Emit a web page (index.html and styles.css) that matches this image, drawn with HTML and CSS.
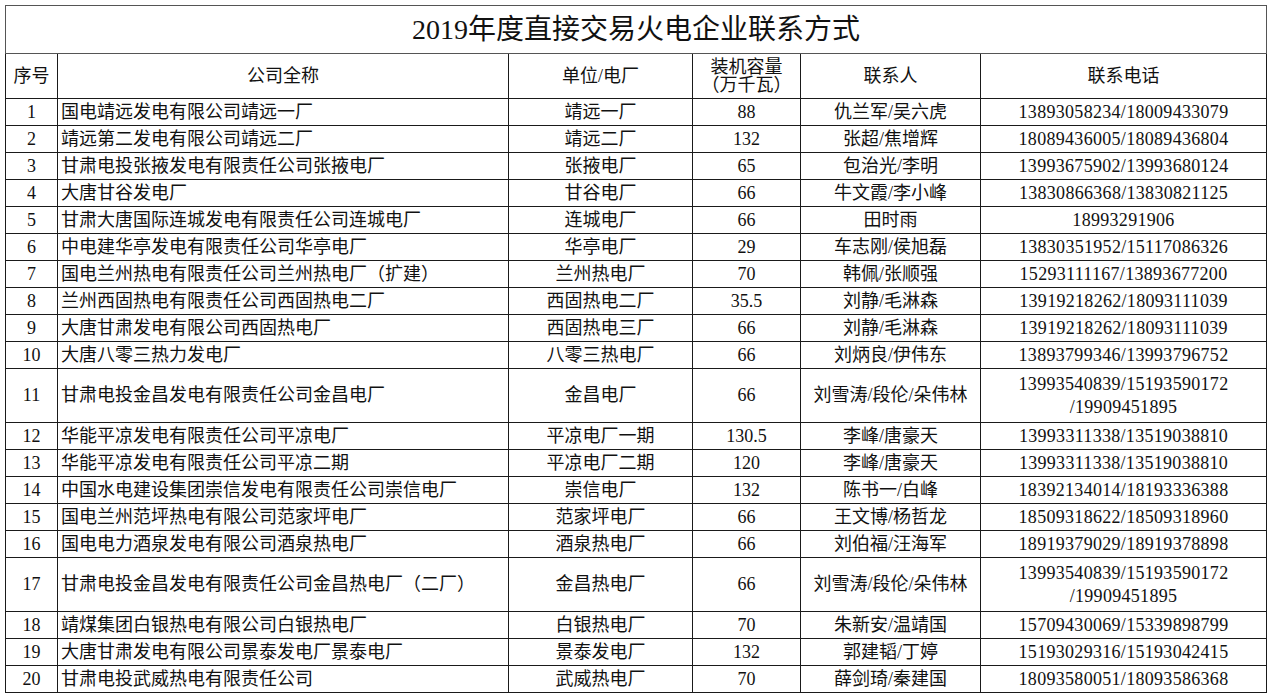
FILE: index.html
```html
<!DOCTYPE html>
<html lang="zh-CN">
<head>
<meta charset="utf-8">
<title>2019年度直接交易火电企业联系方式</title>
<link rel="stylesheet" href="styles.css">
</head>
<body>
<table class="sheet">
  <colgroup>
    <col class="c-no"><col class="c-name"><col class="c-unit"><col class="c-cap"><col class="c-person"><col class="c-phone">
  </colgroup>
  <thead>
    <tr class="title-row"><th colspan="6" class="title">2019年度直接交易火电企业联系方式</th></tr>
    <tr class="head-row">
      <th>序号</th><th>公司全称</th><th>单位/电厂</th><th>装机容量<br>（万千瓦）</th><th>联系人</th><th>联系电话</th>
    </tr>
  </thead>
  <tbody>
    <tr><td>1</td><td class="name">国电靖远发电有限公司靖远一厂</td><td>靖远一厂</td><td>88</td><td>仇兰军/吴六虎</td><td class="phone">13893058234/18009433079</td></tr>
    <tr><td>2</td><td class="name">靖远第二发电有限公司靖远二厂</td><td>靖远二厂</td><td>132</td><td>张超/焦增辉</td><td class="phone">18089436005/18089436804</td></tr>
    <tr><td>3</td><td class="name">甘肃电投张掖发电有限责任公司张掖电厂</td><td>张掖电厂</td><td>65</td><td>包治光/李明</td><td class="phone">13993675902/13993680124</td></tr>
    <tr><td>4</td><td class="name">大唐甘谷发电厂</td><td>甘谷电厂</td><td>66</td><td>牛文霞/李小峰</td><td class="phone">13830866368/13830821125</td></tr>
    <tr><td>5</td><td class="name">甘肃大唐国际连城发电有限责任公司连城电厂</td><td>连城电厂</td><td>66</td><td>田时雨</td><td class="phone">18993291906</td></tr>
    <tr><td>6</td><td class="name">中电建华亭发电有限责任公司华亭电厂</td><td>华亭电厂</td><td>29</td><td>车志刚/侯旭磊</td><td class="phone">13830351952/15117086326</td></tr>
    <tr><td>7</td><td class="name">国电兰州热电有限责任公司兰州热电厂（扩建）</td><td>兰州热电厂</td><td>70</td><td>韩佩/张顺强</td><td class="phone">15293111167/13893677200</td></tr>
    <tr><td>8</td><td class="name">兰州西固热电有限责任公司西固热电二厂</td><td>西固热电二厂</td><td>35.5</td><td>刘静/毛淋森</td><td class="phone">13919218262/18093111039</td></tr>
    <tr><td>9</td><td class="name">大唐甘肃发电有限公司西固热电厂</td><td>西固热电三厂</td><td>66</td><td>刘静/毛淋森</td><td class="phone">13919218262/18093111039</td></tr>
    <tr><td>10</td><td class="name">大唐八零三热力发电厂</td><td>八零三热电厂</td><td>66</td><td>刘炳良/伊伟东</td><td class="phone">13893799346/13993796752</td></tr>
    <tr class="tall"><td>11</td><td class="name">甘肃电投金昌发电有限责任公司金昌电厂</td><td>金昌电厂</td><td>66</td><td>刘雪涛/段伦/朵伟林</td><td class="phone">13993540839/15193590172<br>/19909451895</td></tr>
    <tr><td>12</td><td class="name">华能平凉发电有限责任公司平凉电厂</td><td>平凉电厂一期</td><td>130.5</td><td>李峰/唐豪天</td><td class="phone">13993311338/13519038810</td></tr>
    <tr><td>13</td><td class="name">华能平凉发电有限责任公司平凉二期</td><td>平凉电厂二期</td><td>120</td><td>李峰/唐豪天</td><td class="phone">13993311338/13519038810</td></tr>
    <tr><td>14</td><td class="name">中国水电建设集团崇信发电有限责任公司崇信电厂</td><td>崇信电厂</td><td>132</td><td>陈书一/白峰</td><td class="phone">18392134014/18193336388</td></tr>
    <tr><td>15</td><td class="name">国电兰州范坪热电有限公司范家坪电厂</td><td>范家坪电厂</td><td>66</td><td>王文博/杨哲龙</td><td class="phone">18509318622/18509318960</td></tr>
    <tr><td>16</td><td class="name">国电电力酒泉发电有限公司酒泉热电厂</td><td>酒泉热电厂</td><td>66</td><td>刘伯福/汪海军</td><td class="phone">18919379029/18919378898</td></tr>
    <tr class="tall"><td>17</td><td class="name">甘肃电投金昌发电有限责任公司金昌热电厂（二厂）</td><td>金昌热电厂</td><td>66</td><td>刘雪涛/段伦/朵伟林</td><td class="phone">13993540839/15193590172<br>/19909451895</td></tr>
    <tr><td>18</td><td class="name">靖煤集团白银热电有限公司白银热电厂</td><td>白银热电厂</td><td>70</td><td>朱新安/温靖国</td><td class="phone">15709430069/15339898799</td></tr>
    <tr><td>19</td><td class="name">大唐甘肃发电有限公司景泰发电厂景泰电厂</td><td>景泰发电厂</td><td>132</td><td>郭建韬/丁婷</td><td class="phone">15193029316/15193042415</td></tr>
    <tr><td>20</td><td class="name">甘肃电投武威热电有限责任公司</td><td>武威热电厂</td><td>70</td><td>薛剑琦/秦建国</td><td class="phone">18093580051/18093586368</td></tr>
  </tbody>
</table>
</body>
</html>
```
FILE: styles.css
```css
html, body {
  margin: 0;
  padding: 0;
  background: #ffffff;
}
body {
  padding: 5px 0 0 5px;
  font-family: "Liberation Serif", "Noto Sans CJK SC", serif;
  color: #111111;
}
.sheet {
  border-collapse: collapse;
  table-layout: fixed;
  width: 1261px;
  font-size: 18px;
}
.c-no { width: 52px; }
.c-name { width: 451px; }
.c-unit { width: 184px; }
.c-cap { width: 108px; }
.c-person { width: 180px; }
.c-phone { width: 286px; }
.sheet th,
.sheet td {
  border: 1px solid #1a1a1a;
  padding: 0;
  text-align: center;
  vertical-align: middle;
  font-weight: normal;
  line-height: 18px;
  white-space: nowrap;
  overflow: hidden;
}
.sheet td {
  height: 26px;
}
.sheet tr.tall td {
  height: 53px;
  line-height: 23px;
}
.sheet td.name {
  text-align: left;
  padding-left: 3px;
}
.sheet td.phone {
  letter-spacing: 0.3px;
}
.title-row th {
  height: 47px;
  font-size: 28px;
  line-height: 30px;
  border-color: #555555;
}
.head-row th {
  height: 44px;
  line-height: 18px;
}
```
